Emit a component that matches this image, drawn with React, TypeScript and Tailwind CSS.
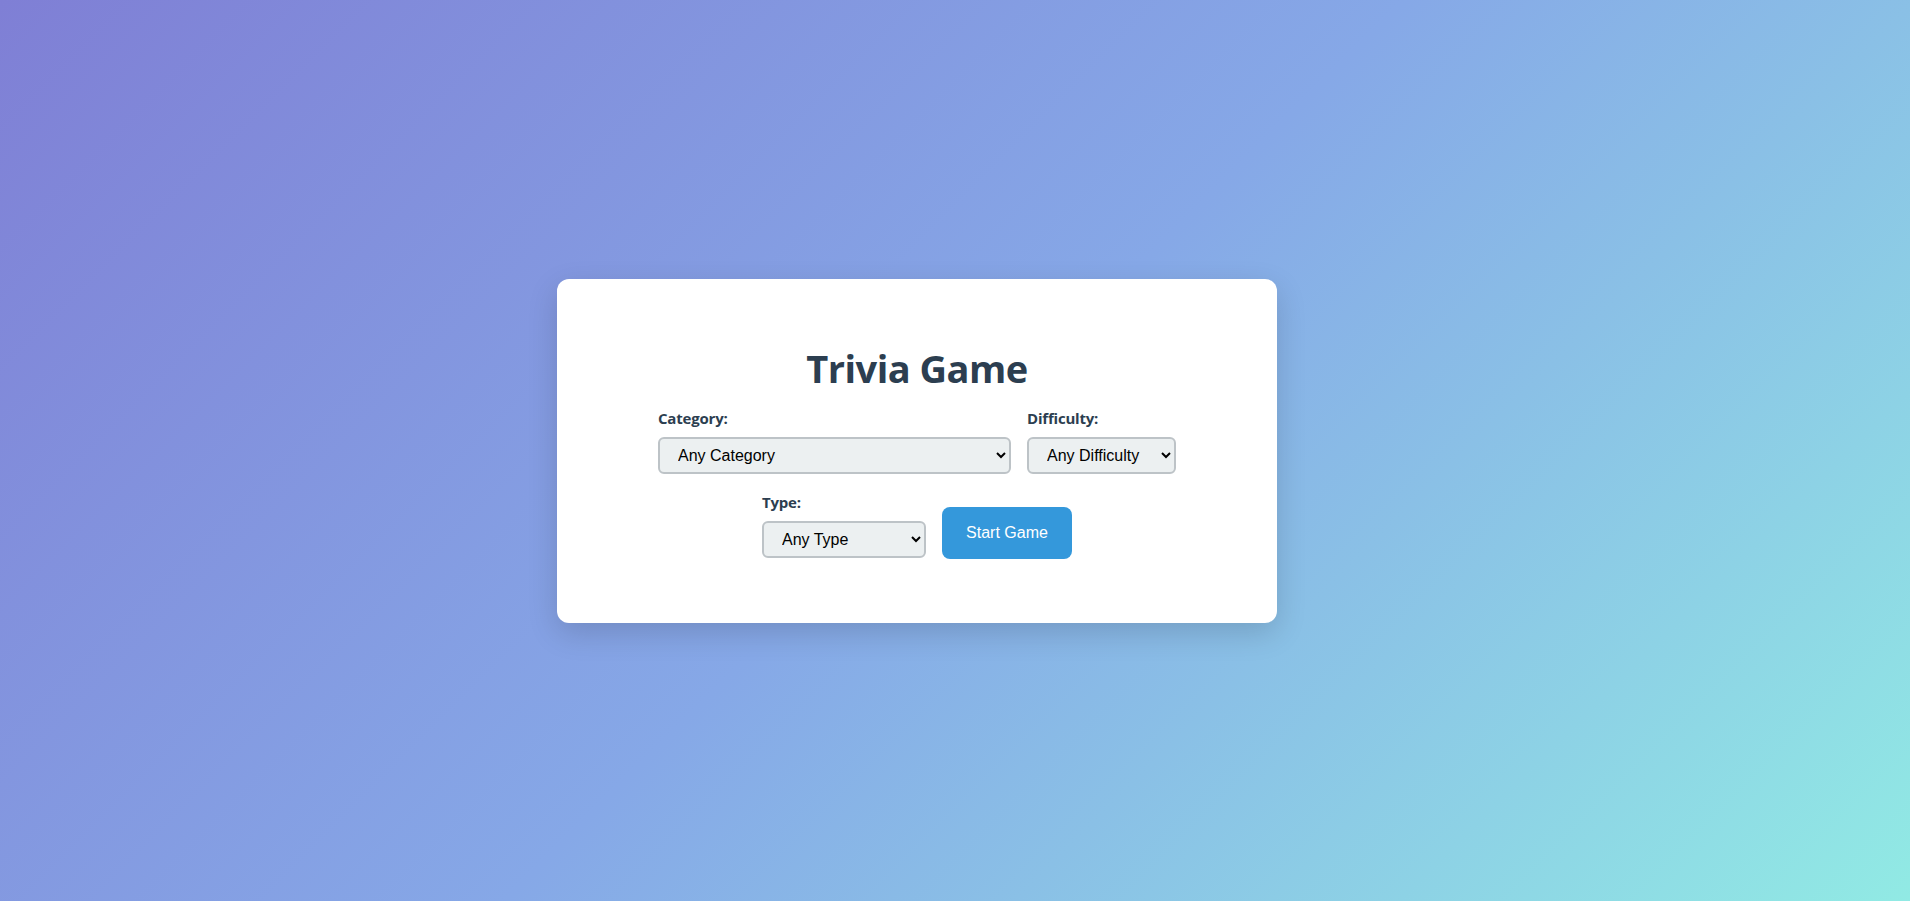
import React from 'react';

const labelCls =
  "block text-[15px] leading-[20px] font-bold text-[#2c3e50] mb-[9px] tracking-[-0.2px] [font-family:'Open_Sans',sans-serif]";
const selectCls =
  "h-[37px] pl-[14px] pr-2 rounded-md border-2 border-[#bdc3c7] bg-[#ecf0f1] text-[16px] text-black [font-family:'Liberation_Sans',Arial,sans-serif]";

export default function App() {
  return (
    <div className="min-h-[901px] w-full flex items-center justify-center pr-[76px] bg-[linear-gradient(135deg,#7f7fd5,#86a8e7,#91eae4)]">
      <div className="w-[720px] bg-white rounded-xl pt-16 pb-[65px] shadow-[0_10px_30px_rgba(0,0,0,0.15)] flex flex-col items-center">
        <h1 className="text-[38px] leading-[48px] mt-px mb-[-1px] font-bold text-[#2c3e50] [font-family:'Open_Sans',sans-serif] tracking-[-0.5px]">
          Trivia Game
        </h1>

        {/* Controls */}
        <div className="mt-[17px] flex justify-center items-end gap-4">
          <div className="flex flex-col">
            <label className={labelCls}>Category:</label>
            <select className={`${selectCls} w-[353px]`} defaultValue="">
              <option value="">Any Category</option>
            </select>
          </div>
          <div className="flex flex-col">
            <label className={labelCls}>Difficulty:</label>
            <select className={`${selectCls} w-[149px]`} defaultValue="">
              <option value="">Any Difficulty</option>
            </select>
          </div>
        </div>

        <div className="mt-[18px] flex justify-center items-end gap-4">
          <div className="flex flex-col">
            <label className={labelCls}>Type:</label>
            <select className={`${selectCls} w-[164px]`} defaultValue="">
              <option value="">Any Type</option>
            </select>
          </div>
          <button className="w-[130px] h-[52px] mb-[-1px] rounded-lg bg-[#3498db] text-white text-[16px] [font-family:'Liberation_Sans',Arial,sans-serif]">
            Start Game
          </button>
        </div>
      </div>
    </div>
  );
}
